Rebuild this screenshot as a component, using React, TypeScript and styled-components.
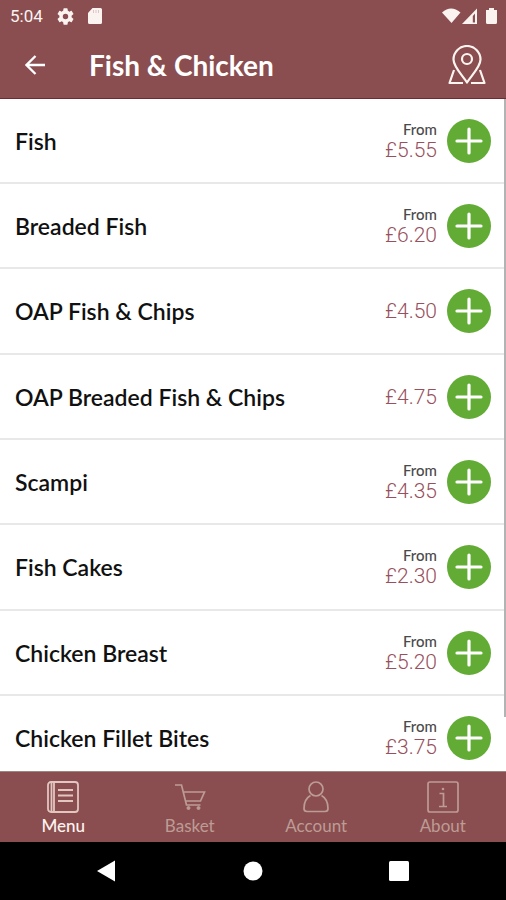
import React from "react";
import styled, { createGlobalStyle } from "styled-components";

const GlobalStyle = createGlobalStyle`
  * { box-sizing: border-box; }
  body { margin: 0; background: #fff; }
  button { border: 0; padding: 0; background: none; color: inherit; font: inherit; cursor: pointer; }
  svg { display: block; }
`;

const Screen = styled.div`
  display: flex;
  flex-direction: column;
  height: 100vh;
  overflow: hidden;
  font-family: Lato, "Open Sans", sans-serif;
`;

const Header = styled.header`
  flex: none;
  background: #8a4e50;
  color: #fff;
  border-bottom: 1px solid #702a30;
`;

const StatusBar = styled.div`
  display: flex;
  align-items: center;
  justify-content: space-between;
  height: 32px;
  padding: 0 8px 0 10px;
  font: 400 17px/32px Roboto, sans-serif;
  color: #fbf3f0;
`;

const StatusGroup = styled.div`
  display: flex;
  align-items: center;
  gap: 14px;
`;

const TitleBar = styled.div`
  display: flex;
  align-items: center;
  height: 66px;
  padding: 0 20px;
`;

const IconButton = styled.button`
  display: flex;
  align-items: center;
  justify-content: center;
  flex: none;
`;

const BackButton = styled(IconButton)`
  width: 30px;
  height: 40px;
`;

const Title = styled.h1`
  flex: 1;
  margin: 0 0 0 39px;
  font-size: 28px;
  line-height: 32px;
  font-weight: 700;
`;

const Main = styled.main`
  position: relative;
  flex: 1;
  min-height: 0;
  overflow: hidden;
`;

const ScrollThumb = styled.div`
  position: absolute;
  top: 0;
  right: 0;
  width: 2px;
  height: 92%;
  background: #b3b3b3;
`;

const List = styled.ul`
  margin: 0;
  padding: 0;
  list-style: none;
`;

const Row = styled.li`
  display: flex;
  align-items: center;
  height: 85px;
  padding: 0 15px;
  border-bottom: 2px solid #e8e8e8;

  &:nth-child(3n) { height: 86px; }
`;

const ItemName = styled.span`
  flex: 1;
  font-size: 23px;
  line-height: 28px;
  font-weight: 600;
  color: #111;
`;

const PriceBlock = styled.div`
  display: flex;
  flex-direction: column;
  align-items: flex-end;
  margin-right: 10px;
`;

const From = styled.span`
  font-size: 15px;
  line-height: 18px;
  font-weight: 500;
  color: #4a4a4a;
`;

const Price = styled.span`
  font-family: Roboto, sans-serif;
  font-size: 21px;
  line-height: 24px;
  font-weight: 300;
  color: #97505c;
`;

const AddButton = styled(IconButton)`
  width: 44px;
  height: 44px;
  border-radius: 50%;
  background: #62ac36;
  color: #fff;
`;

const TabBar = styled.nav`
  display: flex;
  flex: none;
  height: 71px;
  background: #8a4e50;
  border-top: 1px solid #9c8480;
`;

const Tab = styled.button<{ $active?: boolean }>`
  display: flex;
  flex: 1;
  flex-direction: column;
  align-items: center;
  padding-top: 9px;
  gap: 2px;
  color: ${(p) => (p.$active ? "#e2c6c0" : "#bd9c95")};
`;

const TabLabel = styled.span<{ $active?: boolean }>`
  font-size: 17px;
  line-height: 22px;
  font-weight: ${(p) => (p.$active ? 500 : 400)};
  color: ${(p) => (p.$active ? "#fff3ef" : "#bd9c95")};
`;

const SystemBar = styled.div`
  display: flex;
  flex: none;
  align-items: center;
  justify-content: center;
  height: 58px;
  gap: 126px;
  background: #000;
`;

const BackArrow = () => (
  <svg width="20" height="20" viewBox="0 0 20 20" fill="none" stroke="#fff" strokeWidth="2.300">
    <path d="M20 10H2M10.500 1L1.500 10l9 9" />
  </svg>
);

const MapPin = () => (
  <svg width="38" height="40" viewBox="0 0 38 40" fill="none" stroke="#fff5f0" strokeWidth="2.200" strokeLinejoin="round">
    <path d="M19 37.500C15 31 5.500 22 5.500 14.500a13.500 13.500 0 0 1 27 0C32.500 22 23 31 19 37.500Z" />
    <circle cx="19" cy="14" r="5" />
    <path d="M6 25L1.500 38h13.500M32 25l4.500 13H23" />
  </svg>
);

const Gear = () => (
  <svg width="17" height="17" viewBox="2 2 20 20" fill="currentColor">
    <path d="M19.140 12.940c.04-.3.06-.61.06-.94 0-.32-.02-.64-.07-.94l2.030-1.580a.49.49 0 0 0 .12-.61l-1.920-3.320a.49.49 0 0 0-.59-.22l-2.390.96a7 7 0 0 0-1.620-.94l-.36-2.540a.48.48 0 0 0-.48-.41h-3.840a.48.48 0 0 0-.47.41l-.36 2.540a7 7 0 0 0-1.620.94l-2.390-.96a.48.48 0 0 0-.59.22L2.740 8.870a.48.48 0 0 0 .12.61l2.030 1.580a6 6 0 0 0 0 1.880l-2.030 1.580a.49.49 0 0 0-.12.61l1.920 3.320c.12.22.37.29.59.22l2.390-.96c.5.38 1.030.7 1.620.94l.36 2.540c.05.24.24.41.48.41h3.840c.24 0 .44-.17.47-.41l.36-2.540a7 7 0 0 0 1.620-.94l2.390.96c.22.08.47 0 .59-.22l1.920-3.320a.48.48 0 0 0-.12-.61ZM12 15.200a3.200 3.200 0 1 1 0-6.400 3.200 3.200 0 0 1 0 6.400Z" />
  </svg>
);

const SdCard = () => (
  <svg width="14" height="16" viewBox="0 0 14 16" fill="currentColor">
    <path d="M4.500 0h8A1.500 1.500 0 0 1 14 1.500v13a1.500 1.500 0 0 1-1.500 1.500h-11A1.500 1.500 0 0 1 0 14.500V5Z" />
    <path d="M5.500 2v3M8 2v3M10.500 2v3" stroke="#dcc5c3" />
  </svg>
);

const Signals = () => (
  <svg width="56" height="16" viewBox="0 0 56 16" fill="currentColor">
    <path d="M0 4.500Q9 -3.500 18.500 4.500L9.500 15Z" />
    <path d="M20 16L35 0.500V16Z" />
    <path d="M30.800 8V14.500H33V5.500Z" fill="#8a4e50" />
    <path d="M47 0h5v2h3v12.500a1.500 1.500 0 0 1-1.500 1.500h-8a1.500 1.500 0 0 1-1.500-1.500V2h3Z" />
  </svg>
);

const Plus = () => (
  <svg width="28" height="28" viewBox="0 0 28 28" stroke="currentColor" strokeWidth="3.200" strokeLinecap="round">
    <path d="M14 2v24M2 14h24" />
  </svg>
);

const MenuIcon = () => (
  <svg width="32" height="32" viewBox="0 0 32 32" fill="none" stroke="currentColor" strokeWidth="1.800">
    <rect x="1" y="1" width="30" height="30" rx="3" />
    <path d="M4.500 1v30M7 1v30" />
    <path d="M11 9h15M11 14.500h15M11 20h15" strokeWidth="2" />
  </svg>
);

const BasketIcon = () => (
  <svg width="32" height="32" viewBox="0 0 32 32" fill="none" stroke="currentColor" strokeWidth="1.700">
    <path d="M1 4h6.500l5 20h14M9 11h21.500l-4 9H11.500" />
    <circle cx="14.500" cy="27" r="1.500" fill="currentColor" strokeWidth="1" />
    <circle cx="24.500" cy="27" r="1.500" fill="currentColor" strokeWidth="1" />
  </svg>
);

const AccountIcon = () => (
  <svg width="32" height="32" viewBox="0 0 32 32" fill="none" stroke="currentColor" strokeWidth="1.700" strokeLinejoin="round">
    <circle cx="16" cy="8" r="7" />
    <path d="M10.500 14.500C6 17 4 21 4 27.500Q4 30.500 7 30.500H25Q28 30.500 28 27.500C28 21 26 17 21.500 14.500" />
  </svg>
);

const AboutIcon = () => (
  <svg width="32" height="32" viewBox="0 0 32 32" fill="none" stroke="currentColor" strokeWidth="1.700">
    <rect x="1" y="1" width="30" height="30" rx="2" />
    <path d="M12.500 12.500h4V25M12 25.500h8" />
    <circle cx="16" cy="8" r="1.300" fill="currentColor" stroke="none" />
  </svg>
);

const items = [
  { name: "Fish", price: "£5.55", from: true },
  { name: "Breaded Fish", price: "£6.20", from: true },
  { name: "OAP Fish & Chips", price: "£4.50", from: false },
  { name: "OAP Breaded Fish & Chips", price: "£4.75", from: false },
  { name: "Scampi", price: "£4.35", from: true },
  { name: "Fish Cakes", price: "£2.30", from: true },
  { name: "Chicken Breast", price: "£5.20", from: true },
  { name: "Chicken Fillet Bites", price: "£3.75", from: true },
];

const tabs = [
  { label: "Menu", Icon: MenuIcon, active: true },
  { label: "Basket", Icon: BasketIcon, active: false },
  { label: "Account", Icon: AccountIcon, active: false },
  { label: "About", Icon: AboutIcon, active: false },
];

export default function App() {
  return (
    <Screen>
      <GlobalStyle />
      <Header>
        <StatusBar>
          <StatusGroup>
            <span>5:04</span>
            <Gear />
            <SdCard />
          </StatusGroup>
          <Signals />
        </StatusBar>
        <TitleBar>
          <BackButton aria-label="Back"><BackArrow /></BackButton>
          <Title>Fish &amp; Chicken</Title>
          <IconButton aria-label="Find us"><MapPin /></IconButton>
        </TitleBar>
      </Header>
      <Main>
        <List>
          {items.map((item) => (
            <Row key={item.name}>
              <ItemName>{item.name}</ItemName>
              <PriceBlock>
                {item.from && <From>From</From>}
                <Price>{item.price}</Price>
              </PriceBlock>
              <AddButton aria-label={`Add ${item.name}`}><Plus /></AddButton>
            </Row>
          ))}
        </List>
        <ScrollThumb />
      </Main>
      <TabBar>
        {tabs.map(({ label, Icon, active }) => (
          <Tab key={label} $active={active} aria-current={active ? "page" : undefined}>
            <Icon />
            <TabLabel $active={active}>{label}</TabLabel>
          </Tab>
        ))}
      </TabBar>
      <SystemBar>
        <IconButton aria-label="System back">
          <svg width="20" height="22" viewBox="0 0 20 22" fill="#fff"><path d="M0 11L18 0.500V21.500Z" /></svg>
        </IconButton>
        <IconButton aria-label="Home">
          <svg width="20" height="20" viewBox="0 0 20 20" fill="#fff"><circle cx="10" cy="10" r="9.500" /></svg>
        </IconButton>
        <IconButton aria-label="Recent apps">
          <svg width="20" height="20" viewBox="0 0 20 20" fill="#fff"><rect width="20" height="20" rx="1.500" /></svg>
        </IconButton>
      </SystemBar>
    </Screen>
  );
}
